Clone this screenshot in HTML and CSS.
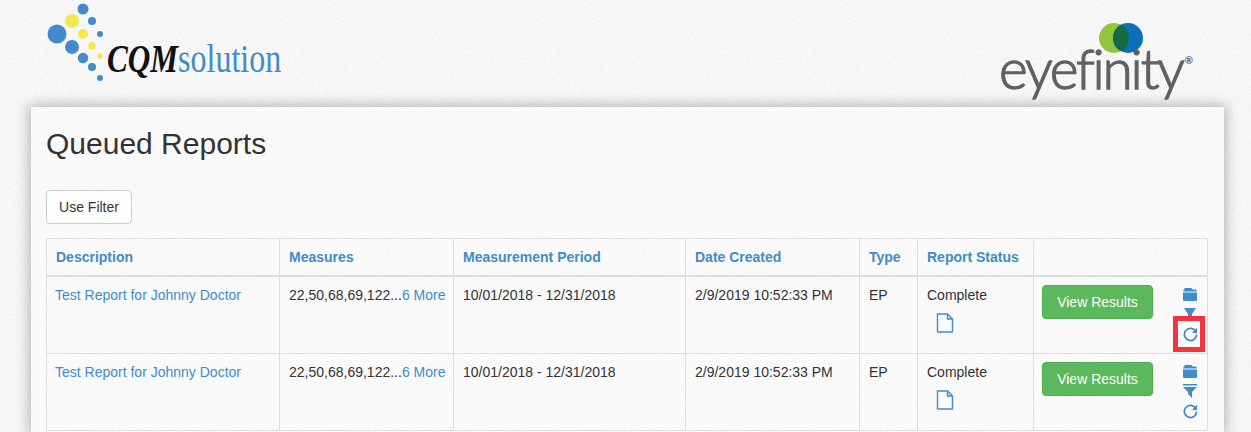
FILE: index.html
```html
<!DOCTYPE html>
<html lang="en">
<head>
<meta charset="utf-8">
<title>Queued Reports</title>
<link rel="stylesheet" href="styles.css">
</head>
<body>
<header class="top">
  <div class="logo-cqm">
    <svg class="dots" width="80" height="82" viewBox="0 0 80 82" aria-hidden="true">
      <circle cx="36" cy="9" r="5.500" fill="#428bca"/>
      <circle cx="25" cy="21" r="7" fill="#f3e84f"/>
      <circle cx="45" cy="21" r="4" fill="#428bca"/>
      <circle cx="10" cy="34" r="9.500" fill="#428bca"/>
      <circle cx="36" cy="34" r="5" fill="#f3e84f"/>
      <circle cx="53" cy="34" r="3" fill="#428bca"/>
      <circle cx="25" cy="47" r="7" fill="#428bca"/>
      <circle cx="45" cy="46" r="3.700" fill="#f3e84f"/>
      <circle cx="53" cy="56" r="2.700" fill="#f3e84f"/>
      <circle cx="36" cy="58" r="5.200" fill="#428bca"/>
      <circle cx="45" cy="67" r="4" fill="#428bca"/>
      <circle cx="53" cy="78" r="3" fill="#428bca"/>
    </svg>
    <span class="cqm-text"><b>CQM</b><span>solution</span></span>
  </div>
  <div class="logo-eye">
    <svg class="rings" width="44" height="30" viewBox="0 0 44 30" aria-hidden="true">
      <circle cx="15" cy="15" r="15" fill="#94c43d"/>
      <circle cx="29" cy="15" r="15" fill="#0a70b8"/>
      <path d="M22 1.750a15 15 0 0 1 0 26.500a15 15 0 0 1 0-26.500z" fill="#146b44"/>
    </svg>
    <span class="eye-text">eyefinity<sup>®</sup></span>
  </div>
</header>
<main class="panel">
  <h1>Queued Reports</h1>
  <button class="filter-btn" type="button">Use Filter</button>
  <table class="reports">
    <colgroup>
      <col class="c1"><col class="c2"><col class="c3"><col class="c4"><col class="c5"><col class="c6"><col class="c7">
    </colgroup>
    <thead>
      <tr>
        <th>Description</th><th>Measures</th><th>Measurement Period</th><th>Date Created</th><th>Type</th><th>Report Status</th><th></th>
      </tr>
    </thead>
    <tbody>
      <tr class="odd">
        <td><a href="#">Test Report for Johnny Doctor</a></td>
        <td>22,50,68,69,122...<a href="#">6 More</a></td>
        <td>10/01/2018 - 12/31/2018</td>
        <td>2/9/2019 10:52:33 PM</td>
        <td>EP</td>
        <td>Complete
          <svg class="doc" width="18" height="20" viewBox="0 0 18 20" aria-hidden="true"><path d="M1.500 1h10l5 5v12.500a.500.500 0 0 1-.500.500H2a.500.500 0 0 1-.500-.500zM11.500 1v5h5" fill="none" stroke="#428bca" stroke-width="1.400"/></svg>
        </td>
        <td>
          <div class="actions">
            <button class="view-btn" type="button">View Results</button>
            <div class="icons">
              <svg width="14" height="13" viewBox="0 0 14 13" aria-hidden="true"><path d="M1.500 0h7l1 1.500H13.500v2H0.500v-2h1zM0 4.500h14V12a1 1 0 0 1-1 1H1a1 1 0 0 1-1-1z" fill="#428bca"/></svg>
              <svg class="funnel" width="14" height="9" viewBox="0 0 14 9" aria-hidden="true"><path d="M1 1h12L9 7v2H5V7z" fill="#428bca"/></svg>
              <span class="hl"><svg width="15" height="15" viewBox="0 0 16 16" aria-hidden="true"><path d="M13.600 4.600A6.500 6.500 0 1 0 14.500 8" fill="none" stroke="#428bca" stroke-width="1.900"/><path d="M15 .8v5.500H9.500z" fill="#428bca"/></svg></span>
            </div>
          </div>
        </td>
      </tr>
      <tr>
        <td><a href="#">Test Report for Johnny Doctor</a></td>
        <td>22,50,68,69,122...<a href="#">6 More</a></td>
        <td>10/01/2018 - 12/31/2018</td>
        <td>2/9/2019 10:52:33 PM</td>
        <td>EP</td>
        <td>Complete
          <svg class="doc" width="18" height="20" viewBox="0 0 18 20" aria-hidden="true"><path d="M1.500 1h10l5 5v12.500a.500.500 0 0 1-.500.500H2a.500.500 0 0 1-.500-.500zM11.500 1v5h5" fill="none" stroke="#428bca" stroke-width="1.400"/></svg>
        </td>
        <td>
          <div class="actions">
            <button class="view-btn" type="button">View Results</button>
            <div class="icons">
              <svg width="14" height="13" viewBox="0 0 14 13" aria-hidden="true"><path d="M1.500 0h7l1 1.500H13.500v2H0.500v-2h1zM0 4.500h14V12a1 1 0 0 1-1 1H1a1 1 0 0 1-1-1z" fill="#428bca"/></svg>
              <svg class="funnel" width="14" height="14" viewBox="0 0 14 14" aria-hidden="true"><path d="M0 0h14v1.500H0zM0 3h14L9 8v6L5 10V8z" fill="#428bca"/></svg>
              <svg class="redo" width="15" height="15" viewBox="0 0 16 16" aria-hidden="true"><path d="M13.600 4.600A6.500 6.500 0 1 0 14.500 8" fill="none" stroke="#428bca" stroke-width="1.900"/><path d="M15 .8v5.500H9.500z" fill="#428bca"/></svg>
            </div>
          </div>
        </td>
      </tr>
    </tbody>
  </table>
</main>
</body>
</html>
```
FILE: styles.css
```css
* { box-sizing: border-box; }
html, body { margin: 0; padding: 0; }
body {
  width: 1251px;
  height: 432px;
  overflow: hidden;
  background-color: #fafafa;
  background-image: url("data:image/svg+xml,%3Csvg xmlns='http://www.w3.org/2000/svg' width='256' height='256'%3E%3Cfilter id='n'%3E%3CfeTurbulence type='fractalNoise' baseFrequency='0.8' numOctaves='2' stitchTiles='stitch'/%3E%3CfeColorMatrix values='0 0 0 0 0 0 0 0 0 0 0 0 0 0 0 0 0 0 0.09 -0.03'/%3E%3C/filter%3E%3Crect width='256' height='256' filter='url(%23n)'/%3E%3C/svg%3E");
  font-family: "Liberation Sans", Arial, sans-serif;
  font-size: 14px;
  color: #333;
}
.top {
  height: 107px;
  padding: 0 57px 0 47px;
  display: flex;
  justify-content: space-between;
  position: relative;
}
.logo-cqm { position: relative; width: 240px; height: 82px; }
.dots { display: block; }
.cqm-text {
  position: absolute;
  left: 60px;
  top: 39px;
  font-family: "Liberation Serif", serif;
  white-space: nowrap;
  line-height: 40px;
  transform: scaleX(0.8);
  transform-origin: left center;
}
.cqm-text b { font-style: italic; color: #111; font-size: 39px; }
.cqm-text span { color: #428bca; font-size: 40px; }
.logo-eye { position: relative; width: 200px; height: 100px; }
.rings { position: absolute; left: 105px; top: 23px; }
.eye-text {
  position: absolute;
  left: 5px;
  top: 33px;
  font-family: Lato, sans-serif;
  font-weight: 300;
  font-size: 55px;
  line-height: 70px;
  letter-spacing: -2.200px;
  color: #5f6062;
  -webkit-text-stroke: 1.300px #5f6062;
  white-space: nowrap;
}
.eye-text sup { font-size: 10px; position: absolute; top: -8px; margin-left: 2px; line-height: 70px; -webkit-text-stroke: 0; font-weight: 700; letter-spacing: 0; }
.panel {
  margin: 0 27px 0 31px;
  height: 325px;
  padding: 16px 16px 0 15px;
  background-color: #fcfcfc;
  background-image: url("data:image/svg+xml,%3Csvg xmlns='http://www.w3.org/2000/svg' width='256' height='256'%3E%3Cfilter id='n'%3E%3CfeTurbulence type='fractalNoise' baseFrequency='0.8' numOctaves='2' stitchTiles='stitch'/%3E%3CfeColorMatrix values='0 0 0 0 0 0 0 0 0 0 0 0 0 0 0 0 0 0 0.07 -0.025'/%3E%3C/filter%3E%3Crect width='256' height='256' filter='url(%23n)'/%3E%3C/svg%3E");
  box-shadow: 0 0 12px 2px rgba(0, 0, 0, 0.28);
}
h1 {
  margin: 0;
  height: 67px;
  font-size: 30px;
  font-weight: 400;
  line-height: 42px;
  color: #333;
}
.filter-btn {
  display: block;
  width: 86px;
  height: 34px;
  padding: 0;
  background: #fff;
  border: 1px solid #ccc;
  border-radius: 4px;
  font: 14px "Liberation Sans", Arial, sans-serif;
  color: #333;
  margin-bottom: 14px;
}
.reports {
  width: 1161px;
  table-layout: fixed;
  border-collapse: collapse;
}
.c1 { width: 233px; }
.c2 { width: 174px; }
.c3 { width: 232px; }
.c4 { width: 174px; }
.c5 { width: 58px; }
.c6 { width: 116px; }
.c7 { width: 174px; }
.reports th, .reports td {
  border: 1px solid #ddd;
  padding: 8px 9px;
  text-align: left;
  vertical-align: top;
  line-height: 20px;
  white-space: nowrap;
}
.reports th {
  height: 37px;
  border-bottom: 2px solid #ddd;
  color: #428bca;
  font-weight: 700;
}
.reports td { height: 77px; }
.reports td:first-child { padding-left: 8px; }
.odd td { background: #f9f9f9; }
a { color: #428bca; text-decoration: none; }
.doc { display: block; margin: 8px 0 0 9px; }
.reports td:last-child { padding: 0 0 0 8px; }
.actions { display: flex; justify-content: space-between; padding-top: 8px; }
.view-btn {
  width: 111px;
  height: 34px;
  padding: 0;
  background: #5cb85c;
  border: 1px solid #4cae4c;
  border-radius: 4px;
  color: #fff;
  font: 14px "Liberation Sans", Arial, sans-serif;
}
.icons {
  width: 14px;
  margin-right: 10px;
  padding-top: 3px;
  display: flex;
  flex-direction: column;
  align-items: center;
}
.icons svg { display: block; flex: none; }
.funnel { margin-top: 6px; }
.redo { margin-top: 6px; }
.hl {
  display: flex;
  align-items: center;
  justify-content: center;
  width: 32px;
  height: 36px;
  margin-right: 2px;
  padding-left: 2px;
  border: 5px solid #f5333f;
  background: #fff;
  flex: none;
}
```
